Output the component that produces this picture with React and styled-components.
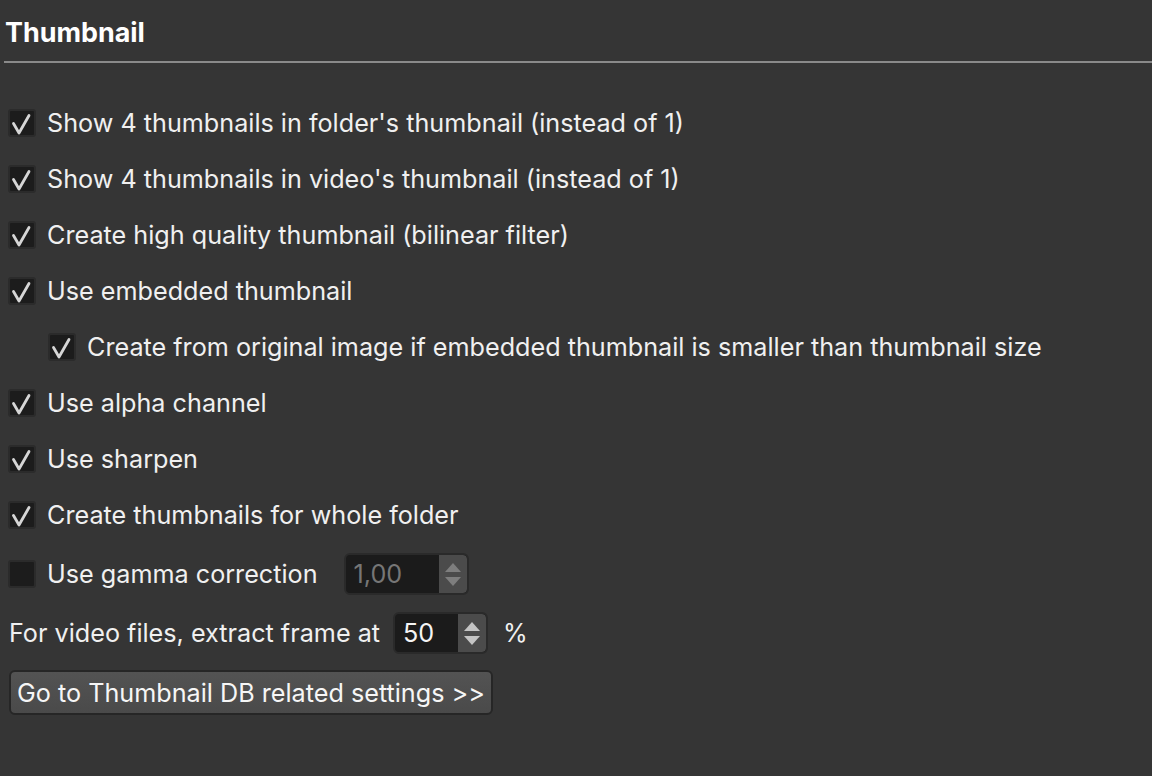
import React from "react";
import styled, { createGlobalStyle } from "styled-components";

const Global = createGlobalStyle`
  html, body { margin: 0; background: #353535; }
  body { font-family: "Inter", "Liberation Sans", sans-serif; color: #f0f0f0; }
  #root { min-height: 776px; }
`;

const Page = styled.div`
  width: 1152px;
  height: 776px;
  box-sizing: border-box;
  padding: 16px 0 0 4px;
  background: #353535;
  display: flex;
  flex-direction: column;
  overflow: hidden;
`;

const Title = styled.h1`
  margin: 0 0 0 1px;
  font-size: 26.9px;
  line-height: 32px;
  font-weight: 700;
  color: #ffffff;
`;

const Divider = styled.div`
  margin-top: 13px;
  height: 2px;
  background: #8a8a8a;
`;

const List = styled.div`
  margin-top: 32px;
  display: flex;
  flex-direction: column;
`;

const Row = styled.label`
  height: ${(p) => p.$h || 56}px;
  display: flex;
  align-items: center;
  padding-left: ${(p) => (p.$indent ? 44 : 4)}px;
  gap: 11px;
  font-size: 25.2px;
  line-height: 32px;
  white-space: nowrap;
`;

const PlainRow = styled(Row)`
  gap: 0;
  padding-left: 5px;
`;

const Box = styled.span`
  width: 28px;
  height: 28px;
  box-sizing: border-box;
  flex: none;
  border: 2px solid #2b2b2b;
  border-radius: 3px;
  background: #1c1c1c;
  display: flex;
  align-items: center;
  justify-content: center;
`;

const Spin = styled.div`
  margin-left: ${(p) => p.$ml}px;
  width: ${(p) => p.$w}px;
  height: ${(p) => p.$h}px;
  box-sizing: border-box;
  border: 2px solid #2a2a2a;
  border-radius: 6px;
  background: #1b1b1b;
  display: flex;
  overflow: hidden;
  flex: none;
`;

const SpinValue = styled.span`
  flex: 1;
  padding-left: 8px;
  display: flex;
  align-items: center;
  font-size: 25.2px;
  color: ${(p) => (p.$disabled ? "#767676" : "#f4f4f4")};
`;

const Stepper = styled.span`
  width: 28px;
  flex: none;
  background: #4b4b4b;
  border-radius: 0 4px 4px 0;
  display: flex;
  flex-direction: column;
  align-items: center;
  justify-content: center;
  gap: 5px;
`;

const Unit = styled.span`
  margin-left: 15px;
`;

const Button = styled.button`
  margin: 9px 0 0 5px;
  align-self: flex-start;
  height: 45px;
  box-sizing: border-box;
  padding: 0 6px 0 6px;
  border: 2px solid #262626;
  border-radius: 6px;
  background: linear-gradient(#535353, #4a4a4a);
  color: #f6f6f6;
  font-family: "Inter", "Liberation Sans", sans-serif;
  font-size: 25.2px;
  line-height: 32px;
  white-space: nowrap;
`;

const Check = () => (
  <svg width="24" height="24" viewBox="0 0 24 24">
    <path d="M3.5 12.5 L9 22 L19 4.5" fill="none" stroke="#d6d6d6" strokeWidth="2.8" strokeLinecap="round" strokeLinejoin="round" />
  </svg>
);

const Arrows = ({ color }) => (
  <>
    <svg width="16" height="9" viewBox="0 0 16 9"><path d="M0 9 L8 0 L16 9 Z" fill={color} /></svg>
    <svg width="16" height="9" viewBox="0 0 16 9"><path d="M0 0 L16 0 L8 9 Z" fill={color} /></svg>
  </>
);

const CheckRow = ({ checked = true, indent, children, h }) => (
  <Row $indent={indent} $h={h}>
    <Box>{checked && <Check />}</Box>
    <span>{children}</span>
  </Row>
);

export default function App() {
  return (
    <>
      <Global />
      <Page>
        <Title>Thumbnail</Title>
        <Divider />
        <List>
          <CheckRow>Show 4 thumbnails in folder's thumbnail (instead of 1)</CheckRow>
          <CheckRow>Show 4 thumbnails in video's thumbnail (instead of 1)</CheckRow>
          <CheckRow>Create high quality thumbnail (bilinear filter)</CheckRow>
          <CheckRow>Use embedded thumbnail</CheckRow>
          <CheckRow indent>Create from original image if embedded thumbnail is smaller than thumbnail size</CheckRow>
          <CheckRow>Use alpha channel</CheckRow>
          <CheckRow>Use sharpen</CheckRow>
          <CheckRow>Create thumbnails for whole folder</CheckRow>
          <Row $h={62}>
            <Box />
            <span>Use gamma correction</span>
            <Spin $ml={15} $w={125} $h={42}>
              <SpinValue $disabled>1,00</SpinValue>
              <Stepper><Arrows color="#7e7e7e" /></Stepper>
            </Spin>
          </Row>
          <PlainRow $h={56}>
            <span>For video files, extract frame at</span>
            <Spin $ml={13} $w={95} $h={42}>
              <SpinValue>50</SpinValue>
              <Stepper><Arrows color="#c4c4c4" /></Stepper>
            </Spin>
            <Unit>%</Unit>
          </PlainRow>
          <Button>Go to Thumbnail DB related settings &gt;&gt;</Button>
        </List>
      </Page>
    </>
  );
}
